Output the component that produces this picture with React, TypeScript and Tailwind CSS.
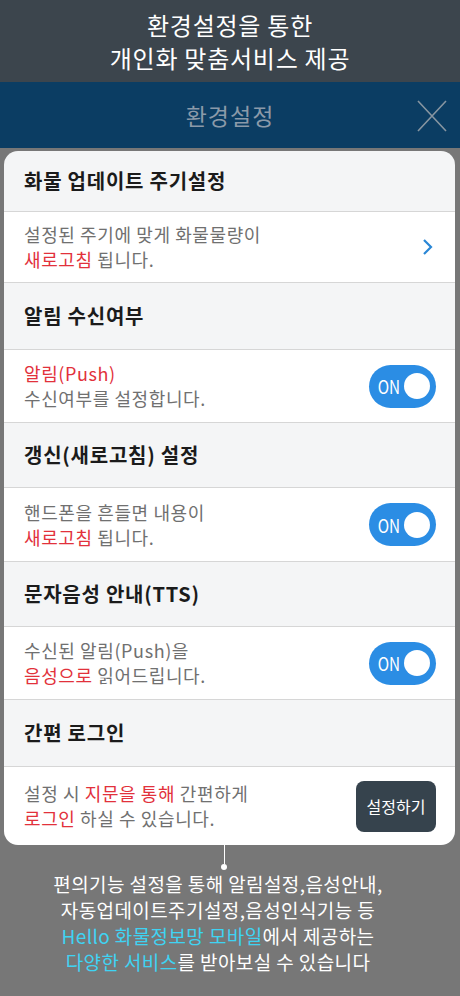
import React from 'react'

const font = { fontFamily: '"Noto Sans CJK KR", "Noto Sans", sans-serif' }

function Toggle() {
  return (
    <div className="flex h-[43px] w-[67px] items-center rounded-full bg-[#2b8de4] pl-[7px] pr-[6px]">
      <span className="w-[22px] scale-x-[0.85] text-center text-[18px] leading-none text-white">ON</span>
      <span className="ml-auto h-[26px] w-[26px] rounded-full bg-white" />
    </div>
  )
}

function Header({ title, h }: { title: string; h: string }) {
  return (
    <div className={`flex items-center border-b border-[#d6d6d6] bg-[#f4f5f6] px-[20px] ${h}`}>
      <span className="text-[20px] font-bold tracking-[0.75px] text-[#1b1b1b]">{title}</span>
    </div>
  )
}

function Body({ children, right, h, last }: { children: React.ReactNode; right?: React.ReactNode; h: string; last?: boolean }) {
  return (
    <div className={`flex items-center justify-between bg-white pl-[20px] pr-[19px] ${h} ${last ? '' : 'border-b border-[#d6d6d6]'}`}>
      <div className="text-[18px] leading-[25px] tracking-[0.6px] text-[#707070]">{children}</div>
      {right}
    </div>
  )
}

const Red = ({ children }: { children: React.ReactNode }) => <span className="text-[#e2313b]">{children}</span>

export default function App() {
  return (
    <div className="flex h-[996px] w-[460px] flex-col overflow-hidden bg-[#777777]" style={font}>
      <div className="flex h-[82px] flex-col items-center justify-center bg-[#3c454d] text-[24px] leading-[33px] tracking-[0.75px] text-white">
        <div>환경설정을 통한</div>
        <div>개인화 맞춤서비스 제공</div>
      </div>

      <div className="relative flex h-[66px] items-center justify-center bg-[#0b3d63]">
        <span className="text-[23px] tracking-[1px] text-[#8b9aa9]">환경설정</span>
        <svg className="absolute right-[13px] top-[18px]" width="30" height="32" viewBox="0 0 30 32">
          <path d="M1 1 L29 31 M29 1 L1 31" stroke="#8795a1" strokeWidth="1.6" fill="none" />
        </svg>
      </div>

      <div className="ml-[4px] mr-[5px] mt-[3px] overflow-hidden rounded-[14px]">
        <Header title="화물 업데이트 주기설정" h="h-[61px]" />
        <Body
          h="h-[71px]"
          right={
            <svg width="11" height="18" viewBox="0 0 11 18" className="mr-[3px]">
              <path d="M2 2 L9 9 L2 16" stroke="#2a87d6" strokeWidth="2.2" fill="none" />
            </svg>
          }
        >
          <div>설정된 주기에 맞게 화물물량이</div>
          <div><Red>새로고침</Red> 됩니다.</div>
        </Body>

        <Header title="알림 수신여부" h="h-[67px]" />
        <Body h="h-[73px]" right={<Toggle />}>
          <div><Red>알림(Push)</Red></div>
          <div>수신여부를 설정합니다.</div>
        </Body>

        <Header title="갱신(새로고침) 설정" h="h-[65px]" />
        <Body h="h-[74px]" right={<Toggle />}>
          <div>핸드폰을 흔들면 내용이</div>
          <div><Red>새로고침</Red> 됩니다.</div>
        </Body>

        <Header title="문자음성 안내(TTS)" h="h-[65px]" />
        <Body h="h-[73px]" right={<Toggle />}>
          <div>수신된 알림(Push)을</div>
          <div><Red>음성으로</Red> 읽어드립니다.</div>
        </Body>

        <Header title="간편 로그인" h="h-[67px]" />
        <Body
          h="h-[78px]"
          last
          right={
            <button type="button" className="h-[51px] w-[80px] rounded-[8px] bg-[#36434d] text-[16px] text-white">
              설정하기
            </button>
          }
        >
          <div>설정 시 <Red>지문을 통해</Red> 간편하게</div>
          <div><Red>로그인</Red> 하실 수 있습니다.</div>
        </Body>
      </div>

      <div className="flex flex-col items-center pr-[12px]">
        <div className="h-[19px] w-px bg-white" />
        <div className="h-[6px] w-[6px] rounded-full bg-white" />
      </div>

      <div className="mt-[1px] flex flex-col items-center pr-[24px] text-[19px] leading-[26px] tracking-[0.4px] text-white">
        <div>편의기능 설정을 통해 알림설정,음성안내,</div>
        <div>자동업데이트주기설정,음성인식기능 등</div>
        <div>
          <span className="text-[#3fd3f2]">Hello 화물정보망 모바일</span>에서 제공하는
        </div>
        <div>
          <span className="text-[#3fd3f2]">다양한 서비스</span>를 받아보실 수 있습니다
        </div>
      </div>
    </div>
  )
}
